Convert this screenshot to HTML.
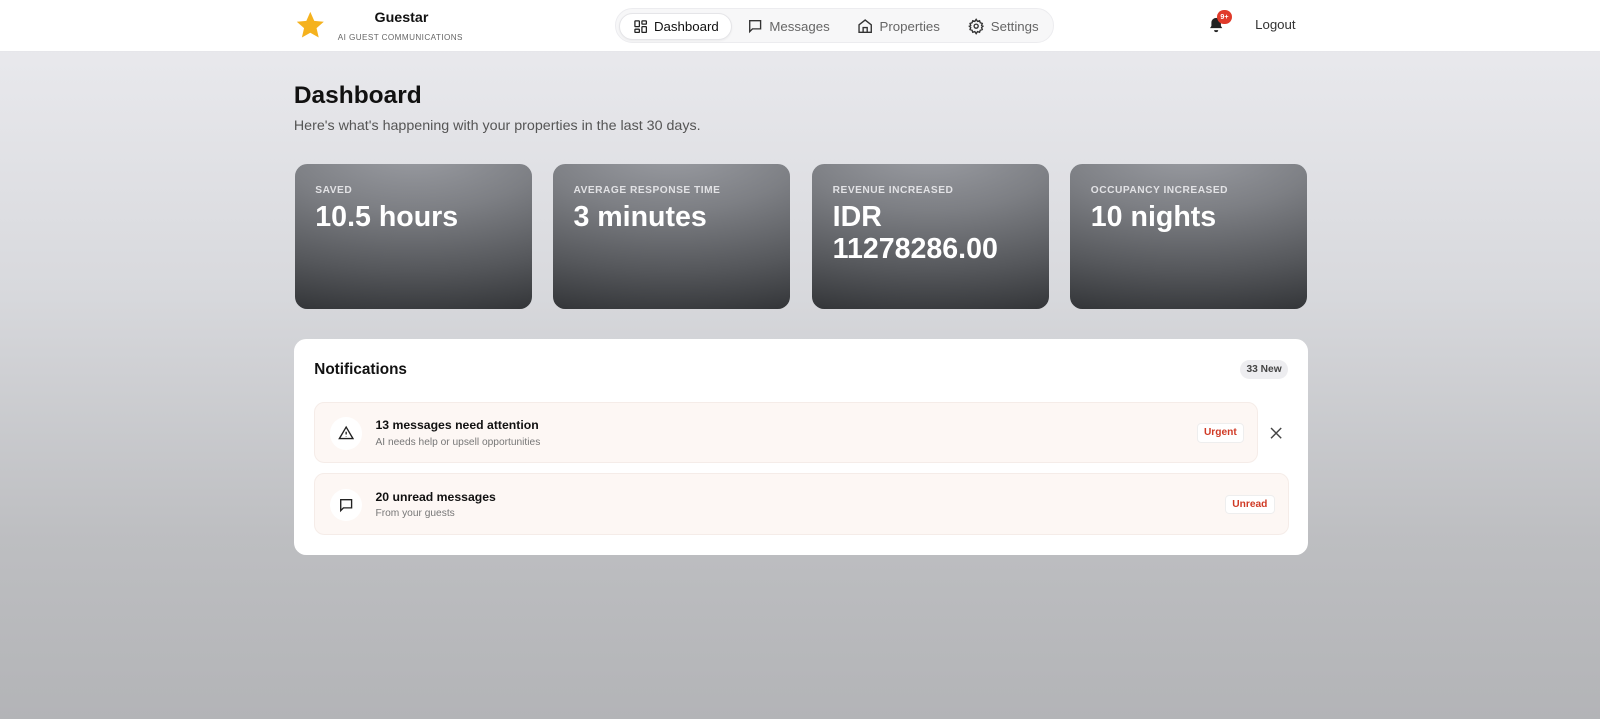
<!DOCTYPE html>
<html><head><meta charset="utf-8"><style>
*{box-sizing:border-box;margin:0;padding:0}
html,body{width:1600px;height:719px;overflow:hidden}
body{font-family:"Liberation Sans",sans-serif;background:linear-gradient(180deg,#ececf0 0%,#d8d9dd 40%,#bdbec1 75%,#b3b4b7 100%);color:#111}
.wrap{position:relative;width:1568px;height:705px;zoom:1.0204}
.top{position:absolute;left:0;top:0;width:1568px;height:51px;background:#fff;border-bottom:1px solid #e6e6ea}
.logo{position:absolute;left:289px;top:10px}
.brand{position:absolute;left:367px;top:10px;font-size:14px;font-weight:bold;color:#111}
.sub{position:absolute;left:331px;top:32px;font-size:8px;letter-spacing:.4px;color:#666}
.nav{position:absolute;left:603px;top:8px;width:430px;height:34px;border:1px solid #ececef;border-radius:17px;background:#f7f7f8}
.nav .it{position:absolute;top:4px;height:26px;display:flex;align-items:center;font-size:13px;color:#666;gap:6px}
.nav .act{background:#fff;border:1px solid #e5e5e8;border-radius:14px;color:#111;padding:0 12px;left:3px;box-shadow:0 1px 2px rgba(0,0,0,.05)}
.bell{position:absolute;left:1184px;top:16px}
.badge{position:absolute;left:1193px;top:10px;width:14px;height:14px;border-radius:7px;background:#e03a2a;color:#fff;font-size:7px;font-weight:bold;text-align:center;line-height:14px}
.logout{position:absolute;left:1230px;top:17px;font-size:13px;color:#333}
h1{position:absolute;left:288px;top:80px;font-size:24px;font-weight:bold;color:#111}
.desc{position:absolute;left:288px;top:116px;font-size:14px;color:#555}
.card{position:absolute;top:161px;width:232px;height:142px;border-radius:12px;background:radial-gradient(ellipse 160% 120% at 50% -10%,#9c9ea4 0%,#7d7f84 35%,#55575b 70%,#2f3134 100%);color:#fff;padding:20px 20px}
.card .l{font-size:10px;font-weight:bold;letter-spacing:.5px;color:#e2e2e5}
.card .v{font-size:28px;font-weight:bold;line-height:32px;margin-top:5px}
.panel{position:absolute;left:288px;top:332px;width:994px;height:212px;background:#fff;border-radius:12px}
.ptitle{position:absolute;left:20px;top:22px;font-size:15px;font-weight:bold}
.new{position:absolute;right:20px;top:21px;background:#ededf0;border-radius:10px;font-size:10px;font-weight:bold;color:#444;padding:4px 6px}
.row{position:absolute;left:20px;height:60px;background:#fdf7f4;border:1px solid #f5ece8;border-radius:10px}
.ic{position:absolute;left:14px;top:14px;width:32px;height:32px;border-radius:16px;background:#fff;display:flex;align-items:center;justify-content:center}
.t1{position:absolute;left:59px;top:15px;font-size:12px;font-weight:bold;color:#111}
.t2{position:absolute;left:59px;top:33px;font-size:10px;color:#777}
.tag{position:absolute;top:20px;background:#fff;border:1px solid #eee;border-radius:4px;font-size:10px;font-weight:bold;color:#d03a25;padding:3px 6px}
</style></head><body><div class="wrap">
<div class="top">
<svg class="logo" width="30" height="30" viewBox="0 0 24 24"><path d="M12 1.5l3.1 7 7.5.7-5.7 5 1.7 7.4L12 17.8l-6.6 3.8 1.7-7.4-5.7-5 7.5-.7z" fill="#f5b21e"/></svg>
<div class="brand">Guestar</div>
<div class="sub">AI GUEST COMMUNICATIONS</div>
<div class="nav">
<div class="it act"><svg width="15" height="15" viewBox="0 0 24 24" fill="none" stroke="#222" stroke-width="2"><rect x="3" y="3" width="7" height="9" rx="1"/><rect x="14" y="3" width="7" height="5" rx="1"/><rect x="14" y="12" width="7" height="9" rx="1"/><rect x="3" y="16" width="7" height="5" rx="1"/></svg>Dashboard</div>
<div class="it" style="left:128px"><svg width="16" height="16" viewBox="0 0 24 24" fill="none" stroke="#333" stroke-width="2"><path d="M4 4h16v12H8l-4 4z"/></svg>Messages</div>
<div class="it" style="left:236px"><svg width="16" height="16" viewBox="0 0 24 24" fill="none" stroke="#333" stroke-width="2"><path d="M3 10l9-7 9 7v11H3z"/><path d="M9 21v-7h6v7"/></svg>Properties</div>
<div class="it" style="left:345px"><svg width="16" height="16" viewBox="0 0 24 24" fill="none" stroke="#333" stroke-width="2"><circle cx="12" cy="12" r="3"/><path d="M12 2l2 3 3-1 1 3 3 1-1 3 2 1-2 2 1 3-3 1-1 3-3-1-2 3-2-3-3 1-1-3-3-1 1-3-2-2 2-1-1-3 3-1 1-3 3 1z"/></svg>Settings</div>
</div>
<svg class="bell" width="16" height="17" viewBox="0 0 24 24"><path d="M12 2a7 7 0 0 0-7 7v5l-2 3h18l-2-3V9a7 7 0 0 0-7-7z" fill="#222"/><path d="M9 20a3 3 0 0 0 6 0z" fill="#222"/></svg>
<div class="badge">9+</div>
<div class="logout">Logout</div>
</div>
<h1>Dashboard</h1>
<div class="desc">Here's what's happening with your properties in the last 30 days.</div>
<div class="card" style="left:289px"><div class="l">SAVED</div><div class="v">10.5 hours</div></div>
<div class="card" style="left:542px"><div class="l">AVERAGE RESPONSE TIME</div><div class="v">3 minutes</div></div>
<div class="card" style="left:796px"><div class="l">REVENUE INCREASED</div><div class="v">IDR<br>11278286.00</div></div>
<div class="card" style="left:1049px"><div class="l">OCCUPANCY INCREASED</div><div class="v">10 nights</div></div>
<div class="panel">
<div class="ptitle">Notifications</div>
<div class="new">33 New</div>
<div class="row" style="top:62px;width:925px">
<div class="ic"><svg width="16" height="16" viewBox="0 0 24 24" fill="none" stroke="#222" stroke-width="2"><path d="M12 3L2 20h20z"/><path d="M12 10v4M12 17v.5"/></svg></div>
<div class="t1">13 messages need attention</div><div class="t2">AI needs help or upsell opportunities</div>
<div class="tag" style="right:13px">Urgent</div></div>
<svg style="position:absolute;left:957px;top:86px" width="12" height="12" viewBox="0 0 12 12" stroke="#444" stroke-width="1.4"><path d="M1 1l10 10M11 1L1 11"/></svg>
<div class="row" style="top:132px;width:955px">
<div class="ic"><svg width="16" height="16" viewBox="0 0 24 24" fill="none" stroke="#222" stroke-width="2"><path d="M4 4h16v12H8l-4 4z"/></svg></div>
<div class="t1">20 unread messages</div><div class="t2">From your guests</div>
<div class="tag" style="right:13px">Unread</div></div>
</div>
</div></body></html>
